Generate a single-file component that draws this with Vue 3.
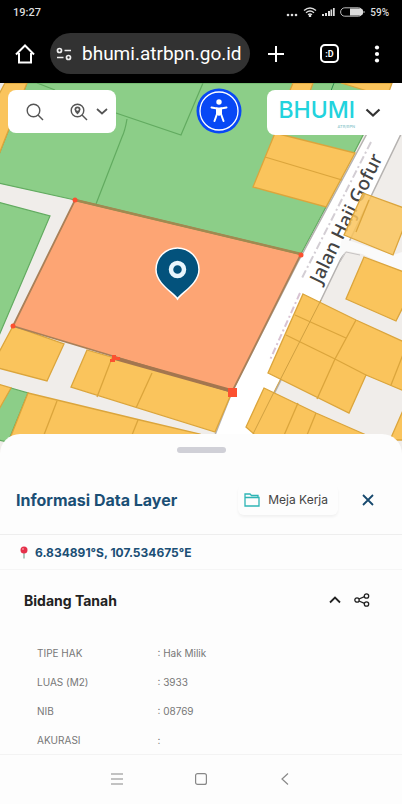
<template>
    <div class="screen">
        <header class="browser">
            <div class="status">
                <span class="clock">19:27</span>
                <div class="signals">
                    <svg width="12" height="10" viewBox="0 0 12 10" fill="#ddd">
                        <circle cx="2" cy="8" r="1.3" />
                        <circle cx="6" cy="8" r="1.3" />
                        <circle cx="10" cy="8" r="1.3" />
                    </svg>
                    <svg width="14" height="10" viewBox="0 0 14 10" fill="none" stroke="#ddd" stroke-width="1.4">
                        <path d="M1 3.5Q7-1.5 13 3.5M3 5.7Q7 2.4 11 5.7M5 7.7Q7 6.2 9 7.7" />
                        <circle cx="7" cy="9" r="0.6" />
                    </svg>
                    <svg width="13" height="10" viewBox="0 0 13 10" fill="#ddd">
                        <path d="M0 7h2v2H0zM3 6h2v3H3zM6 4h2v5H6zM8.5 2.5h1.7V9H8.5zM11 1h1.7v8H11z" />
                    </svg>
                    <svg width="25" height="10" viewBox="0 0 25 10">
                        <rect x="0.6" y="0.8" width="22" height="8.4" rx="4.2" fill="none" stroke="#bbb" />
                        <path d="M10 1.5h10a3 3 0 0 1 3 3v1a3 3 0 0 1-3 3H10z" fill="#ddd" />
                        <path d="M24 4v2" stroke="#bbb" />
                    </svg>
                    <span class="charge">59%</span>
                </div>
            </div>
            <div class="toolbar">
                <button class="bare" aria-label="Home">
                    <svg width="20" height="20" viewBox="0 0 20 20" fill="none" stroke="#fff" stroke-width="2">
                        <path d="M1 10.5 10 1.5l9 9M4 9v9.5h12V9" />
                    </svg>
                </button>
                <label class="address">
                    <svg width="16" height="14" viewBox="0 0 16 14" fill="none" stroke="#eee" stroke-width="1.7">
                        <circle cx="3.5" cy="3.5" r="2" />
                        <path d="M8.5 3.5H15M1 10.5h6.5" />
                        <circle cx="12.5" cy="10.5" r="2" />
                    </svg>
                    <input v-model="url" type="text" aria-label="Address" />
                </label>
                <div class="actions">
                    <button class="bare" aria-label="New tab">
                        <svg width="18" height="18" viewBox="0 0 18 18" stroke="#fff" stroke-width="2">
                            <path d="M9 1v16M1 9h16" />
                        </svg>
                    </button>
                    <button class="bare tabs" aria-label="Tabs">:D</button>
                    <button class="bare" aria-label="More">
                        <svg width="6" height="18" viewBox="0 0 6 18" fill="#fff">
                            <circle cx="3" cy="2.5" r="2.1" />
                            <circle cx="3" cy="9" r="2.1" />
                            <circle cx="3" cy="15.5" r="2.1" />
                        </svg>
                    </button>
                </div>
            </div>
        </header>

        <section class="map">
            <svg class="parcels" viewBox="0 83 402 371" preserveAspectRatio="xMidYMin slice">
                <rect x="0" y="83" width="402" height="371" fill="#f0edea" />
                <!-- open land -->
                <g fill="#8cce88" stroke="#62ab60" stroke-width="1.2">
                    <path d="M27 83H390L326 207 301 254 75 200-2 183V157z" />
                    <path d="M-2 202 50 216-2 338z" />
                    <path d="M11 388 28 393 8 442-2 440V409z" />
                    <path d="M37 83 55 90M110 111 181 135 203 83M127 119Q125 131 122 137L96 204" fill="none" />
                </g>
                <path d="M334 83 329 96" stroke="#2f8d4d" />
                <!-- street -->
                <path d="M405 83H393L370 128 298 262 232 392 213 440H251L321 300 402 132z" fill="#fff" />
                <path d="M370 128 298 262 232 392 213 440M402 132 321 300 251 440" fill="none" stroke="#b5b2b0" stroke-width="1.5" />
                <path d="M371 142 302 278" stroke="#d3ced4" stroke-width="2" stroke-dasharray="8 3 2 3" />
                <path d="M300 293 270 360" stroke="#d8c3d3" stroke-width="2" stroke-dasharray="7 3 2 3" />
                <path d="M342 238 337 262 346 251 362 254 402 272V252L393 255z" fill="#fafafa" />
                <path d="M340 262 346 252 360 255" fill="none" stroke="#c6c3c3" />
                <text class="street" transform="translate(321 285) rotate(-64)">Jalan Haji Gofur</text>
                <!-- built parcels -->
                <g fill="#fac45c" stroke="#dba53c" stroke-width="1.3">
                    <path d="M5 83H27L-2 157V96z" />
                    <path d="M293 83H313L307 100H286zM341 83H392L387 97z" />
                    <path d="M275 133 355 153 326 207 253 187z" />
                    <path d="M265 157 342 180" />
                    <path d="M363 193 404 208V227L393 255 344 235zM369 200 356 232" fill-opacity=".85" />
                    <path d="M364 257 404 272V305L396 321 346 299z" />
                    <path d="M303 294 356 320 404 342V391L366 375 349 413 268 373z" />
                    <path d="M295 315 346 338M286 335 335 359 366 375M356 320 335 359 317 399M404 352 391 385" fill="none" />
                    <path d="M264 388 316 413 380 441H262L246 427zM298 403 282 440M316 413 305 440" />
                    <path d="M404 408 390 440H404z" />
                    <path d="M13 326 64 344 47 381-2 368V354z" />
                    <path d="M87 350 232 392 215 432 71 387zM112 358 97 397M152 373 136 408" />
                    <path d="M-2 384 11 388-2 411zM28 393 140 420 200 434 215 441H9z" />
                    <path d="M57 401 42 440M138 420 130 440" />
                </g>
                <path d="M321 300 276 388 253 434" fill="none" stroke="#d0a040" />
                <!-- selected parcel -->
                <path d="M75 200 301 254 232 392 13 326z" fill="#fda574" stroke="#a98058" stroke-width="1.8" />
                <path d="M75 200 301 254" stroke="#a08a50" stroke-width="2.5" />
                <path d="M114 358 232 391" stroke="#a3764f" stroke-width="3.5" />
                <g fill="#fc5130">
                    <circle cx="75" cy="200" r="2.5" />
                    <circle cx="301" cy="255" r="2.5" />
                    <circle cx="13" cy="326" r="2.5" />
                    <path d="M112 355h4v2h4v3h-5v2h-5v-3h2zM228 388h9v9h-9z" />
                </g>
                <path
                    d="M177.5 299C174 293 156 284 156 269.5A21.5 21.5 0 0 1 199 269.5C199 284 181 293 177.5 299z"
                    fill="#03527c"
                    stroke="#fff"
                    stroke-width="1.5"
                />
                <circle cx="177.5" cy="269.5" r="6.5" fill="none" stroke="#e8f6fd" stroke-width="4.5" />
            </svg>

            <div class="controls">
                <div class="card search">
                    <button class="bare" aria-label="Search">
                        <svg width="18" height="18" viewBox="0 0 18 18" fill="none" stroke="#555" stroke-width="1.4">
                            <circle cx="7.5" cy="7.5" r="6.3" />
                            <path d="m12 12 5 5" />
                        </svg>
                    </button>
                    <button class="bare pick" aria-label="Search by location">
                        <svg width="18" height="18" viewBox="0 0 18 18" fill="none" stroke="#555" stroke-width="1.4">
                            <circle cx="7.5" cy="7.5" r="6.3" />
                            <path d="m12 12 5 5" />
                            <path d="M7.5 11.5Q4.5 8.5 4.5 6.5a3 3 0 0 1 6 0Q10.5 8.5 7.5 11.5z" fill="#555" stroke="none" />
                            <circle cx="7.5" cy="6.5" r="1.2" fill="#fff" stroke="none" />
                        </svg>
                        <svg width="12" height="7" viewBox="0 0 12 7" fill="none" stroke="#555" stroke-width="1.7">
                            <path d="m1 1 5 4.5L11 1" />
                        </svg>
                    </button>
                </div>
                <button class="bare access" aria-label="Accessibility">
                    <svg width="46" height="46" viewBox="0 0 46 46">
                        <circle cx="23" cy="23" r="22.5" fill="#0848f5" />
                        <circle cx="23" cy="23" r="19" fill="none" stroke="#fff" stroke-width="1.3" />
                        <circle cx="23" cy="14" r="2.7" fill="#fff" />
                        <path
                            d="M15.5 19.5 21 20.5V26L18.5 33M30.5 19.5 25 20.5V26L27.5 33"
                            fill="none"
                            stroke="#fff"
                            stroke-width="2"
                            stroke-linecap="round"
                            stroke-linejoin="round"
                        />
                        <path d="M20 19.5h6V26l-3 2-3-2z" fill="#fff" />
                    </svg>
                </button>
                <button class="bare card brand">
                    <span class="logo">
                        <span>BHUMI</span>
                        <small>ATR/BPN</small>
                    </span>
                    <svg width="16" height="10" viewBox="0 0 16 10" fill="none" stroke="#333" stroke-width="2.2">
                        <path d="m1.5 1.5 6.5 6 6.5-6" />
                    </svg>
                </button>
            </div>
        </section>

        <main class="sheet">
            <div class="handle"></div>
            <div class="sheet-header">
                <h1>Informasi Data Layer</h1>
                <button class="bare desk">
                    <svg width="16" height="14" viewBox="0 0 16 14" fill="none" stroke="#2fb5b5" stroke-width="1.3">
                        <path d="M1 13V1h5l1.5 1.5H14V4M1 4.5h14V13H1z" />
                    </svg>
                    Meja Kerja
                </button>
                <button class="bare" aria-label="Close">
                    <svg width="12" height="12" viewBox="0 0 12 12" stroke="#17496e" stroke-width="1.8">
                        <path d="m1 1 10 10M11 1 1 11" />
                    </svg>
                </button>
            </div>
            <div class="coords">
                <svg width="8" height="13" viewBox="0 0 8 13">
                    <path d="M4 6v6.5" stroke="#8fb0a4" stroke-width="1.4" />
                    <circle cx="4" cy="4" r="3.5" fill="#e5304a" />
                    <circle cx="3" cy="3" r="1" fill="#f58a96" />
                </svg>
                6.834891°S, 107.534675°E
            </div>
            <div class="layer-header">
                <h2>Bidang Tanah</h2>
                <button class="bare" aria-label="Collapse" @click="open = !open">
                    <svg width="12" height="8" viewBox="0 0 12 8" fill="none" stroke="#222" stroke-width="1.8">
                        <path d="m1 6.5 5-5 5 5" />
                    </svg>
                </button>
                <button class="bare" aria-label="Share">
                    <svg width="16" height="14" viewBox="0 0 16 14" fill="none" stroke="#222" stroke-width="1.3">
                        <circle cx="3" cy="7" r="2.2" />
                        <circle cx="12.5" cy="3" r="2.2" />
                        <circle cx="12.5" cy="11" r="2.2" />
                        <path d="m5 6 5.5-2.3M5 8l5.5 2.3" />
                    </svg>
                </button>
            </div>
            <table v-if="open">
                <tbody>
                    <tr v-for="row in rows" :key="row.label">
                        <th scope="row">{{ row.label }}</th>
                        <td>: {{ row.value }}</td>
                    </tr>
                </tbody>
            </table>
        </main>

        <nav class="system">
            <button class="bare" aria-label="Recent apps">
                <svg width="12" height="12" viewBox="0 0 12 12" stroke="#888" stroke-width="1.2">
                    <path d="M0 1h12M0 6h12M0 11h12" />
                </svg>
            </button>
            <button class="bare" aria-label="Home screen">
                <svg width="12" height="12" viewBox="0 0 12 12" fill="none" stroke="#888" stroke-width="1.2">
                    <rect x="0.6" y="0.6" width="10.8" height="10.8" rx="2" />
                </svg>
            </button>
            <button class="bare" aria-label="Back">
                <svg width="12" height="12" viewBox="0 0 12 12" fill="none" stroke="#888" stroke-width="1.2">
                    <path d="M9 0.5 3 6l6 5.5" />
                </svg>
            </button>
        </nav>
    </div>
</template>

<script setup>
    import { ref } from 'vue';

    const url = ref('bhumi.atrbpn.go.id');
    const open = ref(true);

    const rows = [
        { label: 'TIPE HAK', value: 'Hak Milik' },
        { label: 'LUAS (M2)', value: '3933' },
        { label: 'NIB', value: '08769' },
        { label: 'AKURASI', value: '' },
    ];
</script>

<style>
    body {
        background: #fdfdfd;
    }
</style>

<style scoped>
    .screen {
        font-family: Inter, 'Liberation Sans', sans-serif;
        color: #222;
    }

    .screen svg {
        display: block;
        flex: none;
    }

    .bare {
        display: flex;
        align-items: center;
        padding: 0;
        border: none;
        background: none;
        font: inherit;
        color: inherit;
        cursor: pointer;
    }

    .browser {
        background: #000;
        color: #fff;
        font-family: Roboto, sans-serif;
    }

    .status {
        display: flex;
        align-items: center;
        justify-content: space-between;
        height: 24px;
        padding: 0 13px;
        font-size: 11px;
        font-weight: 500;
        color: #ddd;
    }

    .signals {
        display: flex;
        align-items: center;
        gap: 5px;
    }

    .charge {
        font-size: 10px;
    }

    .toolbar {
        display: flex;
        align-items: center;
        gap: 15px;
        height: 59px;
        padding: 0 22px 0 15px;
        box-sizing: border-box;
    }

    .address {
        display: flex;
        flex: 1;
        align-items: center;
        gap: 10px;
        min-width: 0;
        height: 41px;
        padding: 0 6px;
        border-radius: 21px;
        background: #323232;
        box-sizing: border-box;
    }

    .address input {
        flex: 1;
        min-width: 0;
        padding: 0;
        border: none;
        outline: none;
        background: none;
        color: #fff;
        font-family: Roboto, sans-serif;
        font-size: 19px;
    }

    .actions {
        display: flex;
        flex: none;
        align-items: center;
        gap: 35px;
        padding-left: 2px;
    }

    .tabs {
        justify-content: center;
        width: 19px;
        height: 19px;
        border: 2px solid #fff;
        border-radius: 5px;
        box-sizing: border-box;
        font-size: 9px;
        font-weight: 700;
    }

    .map {
        position: relative;
        height: 371px;
        overflow: hidden;
    }

    .parcels {
        position: absolute;
        inset: 0;
        width: 100%;
        height: 100%;
    }

    .street {
        font-family: 'Noto Sans', sans-serif;
        font-size: 19px;
        font-weight: 500;
        fill: #444;
        stroke: #fff;
        stroke-width: 2px;
        paint-order: stroke;
    }

    .controls {
        position: relative;
        display: flex;
        align-items: flex-start;
        gap: 25px;
        padding: 5px 0 0 8px;
    }

    .card {
        border-radius: 8px;
        background: #fff;
    }

    .search {
        display: flex;
        align-items: center;
        gap: 26px;
        height: 43px;
        padding: 0 8px 0 18px;
        margin-top: 2px;
    }

    .pick {
        gap: 8px;
    }

    .access {
        margin-left: auto;
    }

    .brand {
        gap: 10px;
        height: 45px;
        padding: 0 21px 0 11px;
        margin-top: 2px;
        border-radius: 8px 0 0 8px;
    }

    .logo {
        display: flex;
        flex-direction: column;
        align-items: flex-end;
        font-size: 23px;
        font-weight: 500;
        line-height: 28px;
        color: #22d3dd;
    }

    .logo small {
        font-size: 4px;
        line-height: 5px;
        color: #8cc8cc;
    }

    .sheet {
        position: relative;
        margin-top: -20px;
        padding-top: 13px;
        border-radius: 20px 20px 0 0;
        background: #fdfdfd;
    }

    .handle {
        width: 49px;
        height: 6px;
        margin: 0 auto;
        border-radius: 3px;
        background: #d0d0d7;
    }

    .sheet-header {
        display: flex;
        align-items: center;
        gap: 24px;
        height: 82px;
        padding: 12px 28px 0 16px;
        border-bottom: 1px solid #eee;
        box-sizing: border-box;
    }

    h1 {
        flex: 1;
        margin: 0;
        font-size: 16px;
        font-weight: 700;
        color: #1b4f75;
    }

    .desk {
        gap: 8px;
        height: 30px;
        padding: 0 10px 0 6px;
        border-radius: 6px;
        box-shadow: 0 2px 3px rgba(0, 0, 0, 0.05);
        font-size: 12px;
        color: #444;
    }

    .coords {
        display: flex;
        align-items: center;
        gap: 7px;
        height: 35px;
        padding: 0 20px;
        border-bottom: 1px solid #f5f5f5;
        box-sizing: border-box;
        font-size: 12px;
        font-weight: 700;
        color: #1b4f75;
    }

    .layer-header {
        display: flex;
        align-items: center;
        gap: 13px;
        height: 60px;
        padding: 0 32px 0 24px;
    }

    h2 {
        flex: 1;
        margin: 0;
        font-size: 14px;
        font-weight: 700;
    }

    table {
        width: 100%;
        margin-top: 8px;
        padding-left: 37px;
        border-spacing: 0;
        font-size: 10px;
        color: #777;
    }

    th,
    td {
        height: 29px;
        padding: 0;
        font-weight: 400;
        text-align: left;
    }

    th {
        width: 33%;
    }

    .system {
        display: flex;
        align-items: center;
        justify-content: center;
        gap: 72px;
        height: 48px;
        border-top: 1px solid #f3f3f3;
    }
</style>
